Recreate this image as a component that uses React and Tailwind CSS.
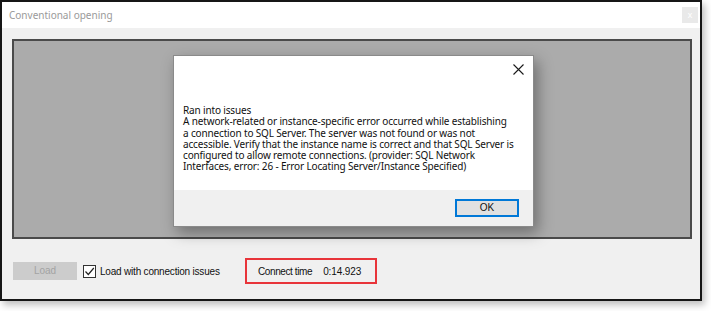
import React from 'react';

const message = [
    'Ran into issues',
    'A network-related or instance-specific error occurred while establishing',
    'a connection to SQL Server. The server was not found or was not',
    'accessible. Verify that the instance name is correct and that SQL Server is',
    'configured to allow remote connections. (provider: SQL Network',
    'Interfaces, error: 26 - Error Locating Server/Instance Specified)',
].join('\n');

const ErrorDialog = () => (
    <div className="relative w-[361px] h-[172px] bg-white border border-[#8a8a8a] shadow-[4px_6px_14px_rgba(0,0,0,0.35)] flex flex-col">
        {/* close */}
        <button className="absolute top-[8px] right-[9px] w-[11px] h-[11px] flex items-center justify-center">
            <svg width="11" height="11" viewBox="0 0 11 11">
                <path d="M0.5 0.5 L10.5 10.5 M10.5 0.5 L0.5 10.5" stroke="#1a1a1a" strokeWidth="1.1" />
            </svg>
        </button>

        <div className="flex-1 pl-[9px] pt-[49px]">
            <p
                className="whitespace-pre text-[10px] tracking-[-0.15px] leading-[11.3px] text-[#111]"
                style={{ fontFamily: '"Noto Sans", sans-serif' }}
            >
                {message}
            </p>
        </div>

        <div className="h-[36px] bg-[#f0f0f0] flex items-center justify-end pr-[14px] pb-[1px]">
            <button className="w-[64px] h-[18px] bg-[#e1e1e1] border-2 border-[#0078d7] text-[10px] leading-none text-[#111]">
                OK
            </button>
        </div>
    </div>
);

export default function App() {
    return (
        <div
            className="w-[711px] h-[311px] bg-white"
            style={{ fontFamily: '"Liberation Sans", Arial, sans-serif' }}
        >
            <div className="w-[702px] h-[301px] border-2 border-[#161616] bg-[#f0f0f0] flex flex-col shadow-[3px_4px_7px_rgba(0,0,0,0.25)]">
                {/* Title bar */}
                <div className="h-[26px] bg-white flex items-center justify-between pl-[7px] pr-[2px]">
                    <span
                        className="text-[10px] text-[#9a9a9a] whitespace-nowrap"
                        style={{ fontFamily: '"Noto Sans", sans-serif' }}
                    >
                        Conventional opening
                    </span>
                    <div className="w-[16px] h-[16px] bg-[#e9e9e9] flex items-center justify-center text-[9px] leading-none text-white">
                        x
                    </div>
                </div>

                {/* Body */}
                <div className="flex-1 flex flex-col pl-[10px] pr-[7px] pt-[11px]">
                    <div className="w-[680px] h-[200px] bg-[#ababab] border-2 border-[#4a4a4a] flex items-center justify-center pt-[4px] pl-[3px]">
                        <ErrorDialog />
                    </div>

                    <div className="flex items-center mt-[19px] h-[26px]">
                        <button className="ml-[1px] w-[64px] h-[18px] bg-[#cccccc] text-[10px] text-[#a3a3a3] leading-none">
                            Load
                        </button>
                        <div className="ml-[6px] w-[162px] flex items-center">
                            <div className="w-[13px] h-[13px] border border-[#333] bg-white flex items-center justify-center">
                                <svg width="11" height="11" viewBox="0 0 11 11">
                                    <path d="M1.5 5.5 L4.3 8.5 L9.8 2" fill="none" stroke="#222" strokeWidth="1.2" />
                                </svg>
                            </div>
                            <span className="ml-[4px] text-[10px] tracking-[-0.2px] text-[#111] whitespace-nowrap">
                                Load with connection issues
                            </span>
                        </div>

                        <div className="w-[132px] h-[26px] border-2 border-[#e8343a] flex items-center pl-[11px] text-[10px] text-[#111] whitespace-nowrap">
                            <span className="tracking-[-0.4px]">Connect time</span>
                            <span className="ml-[11px] tracking-[-0.1px]">0:14.923</span>
                        </div>
                    </div>
                </div>
            </div>
        </div>
    );
}
